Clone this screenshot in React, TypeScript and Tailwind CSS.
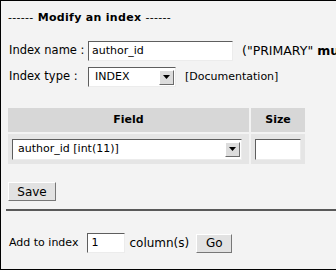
import React from 'react';

const inset = 'shrink-0 border border-t-[#5e5e5e] border-l-[#5e5e5e] border-r-[#ececec] border-b-[#ececec] bg-white';
const btn = 'shrink-0 border border-t-white border-l-white border-r-[#777] border-b-[#777] bg-[#e2e2e2] text-[12px] text-black';

const Arrow = () => (
  <span className="flex h-[15px] w-[15px] shrink-0 items-center justify-center border border-t-white border-l-white border-r-[#6b6b6b] border-b-[#6b6b6b] bg-[#dcdcdc]">
    <svg width="7" height="4" viewBox="0 0 7 4">
      <path d="M0 0h7L3.5 4z" fill="#000" />
    </svg>
  </span>
);

const App: React.FC = () => {
  return (
    <div
      className="w-[336px] h-[273px] overflow-hidden bg-white text-[11px] text-black"
      style={{ fontFamily: '"DejaVu Sans", Verdana, sans-serif' }}
    >
      <div className="h-[270px] bg-[#f3f3f3] border-l border-t border-b border-black overflow-hidden">
        <div className="pl-[7px] pt-[10px] h-[28px] font-bold text-[11px] tracking-[0.3px] leading-[13px] whitespace-nowrap">
          <span className="font-normal">------</span> Modify an index <span className="font-normal">------</span>
        </div>

        <div className="pl-[8px] pt-[12px] flex flex-col gap-[6px]">
          <div className="flex items-center h-[20px] whitespace-nowrap">
            <span className="w-[79px] shrink-0 text-[11.5px]">Index name :</span>
            <div className={`${inset} w-[145px] h-[20px] pl-[3px] leading-[18px]`}>author_id</div>
            <span className="ml-[9px] shrink-0 text-[12.5px]">("PRIMARY" <b>must</b> be the name of and only of a primary key!)</span>
          </div>
          <div className="flex items-center h-[20px] whitespace-nowrap">
            <span className="w-[79px] shrink-0 text-[11.5px]">Index type :</span>
            <div className={`${inset} w-[88px] h-[20px] pl-[6px] pr-[1px] flex items-center justify-between`}>
              <span>INDEX</span>
              <Arrow />
            </div>
            <span className="ml-[9px] shrink-0">[Documentation]</span>
          </div>
        </div>

        <div className="pl-[6px] pt-[19px]">
          <table className="border-separate border-spacing-[2px] -ml-[1px]">
            <thead>
              <tr>
                <th className="w-[241px] h-[24px] bg-[#d7d7d7] font-bold p-0">Field</th>
                <th className="w-[54px] h-[24px] bg-[#d7d7d7] font-bold p-0">Size</th>
              </tr>
            </thead>
            <tbody>
              <tr>
                <td className="h-[30px] bg-[#e5e5e5] pl-[4px] p-0">
                  <div className={`${inset} w-[230px] h-[21px] pl-[5px] pr-[1px] flex items-center justify-between`}>
                    <span>author_id [int(11)]</span>
                    <Arrow />
                  </div>
                </td>
                <td className="h-[30px] bg-[#e5e5e5] pl-[4px] p-0">
                  <div className={`${inset} w-[46px] h-[21px]`} />
                </td>
              </tr>
            </tbody>
          </table>
        </div>

        <div className="pl-[7px] pt-[16px]">
          <button className={`${btn} w-[48px] h-[19px] leading-none`}>Save</button>
        </div>

        <div className="ml-[5px] mt-[8px] h-[2px] bg-[#595959]" />

        <div className="pl-[8px] pt-[22px] flex items-center h-[42px] whitespace-nowrap">
          <span>Add to index</span>
          <div className={`${inset} ml-[9px] w-[38px] h-[20px] pl-[3px] leading-[18px]`}>1</div>
          <span className="ml-[4px] text-[12px]">column(s)</span>
          <button className={`${btn} ml-[7px] w-[36px] h-[19px] leading-none`}>Go</button>
        </div>
      </div>
    </div>
  );
};

export default App;
